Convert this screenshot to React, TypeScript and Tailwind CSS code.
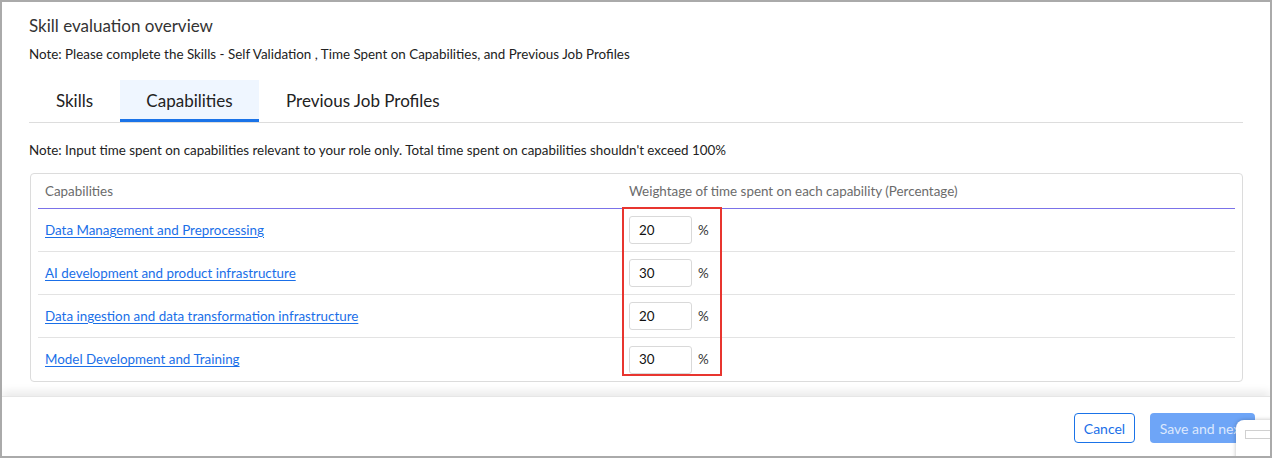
import React from "react";

const rows = [
  { name: "Data Management and Preprocessing", value: "20" },
  { name: "AI development and product infrastructure", value: "30" },
  { name: "Data ingestion and data transformation infrastructure", value: "20" },
  { name: "Model Development and Training", value: "30" },
];

export default function App() {
  return (
    <div
      className="relative w-[1272px] h-[458px] overflow-hidden bg-white border-2 border-[#aaaaaa] flex flex-col text-[#222]"
      style={{ fontFamily: "Lato, 'Noto Sans', sans-serif" }}
    >
      <div className="flex-1 px-[27px] pt-[13px]">
        <div className="text-[17px] leading-[22px] text-[#333]">Skill evaluation overview</div>
        <div className="mt-[8px] text-[13.4px] leading-[18px] text-[#222]">
          Note: Please complete the Skills - Self Validation , Time Spent on Capabilities, and Previous Job Profiles
        </div>
        <div className="mt-[17px] flex border-b border-[#dddddd] w-[1214px]">
          <div className="h-[42px] w-[91px] flex items-center justify-center text-[17px] text-[#222]">Skills</div>
          <div className="h-[42px] w-[139px] flex items-center justify-center text-[17px] text-[#222] bg-[#eff6ff] border-b-[3px] border-[#1a73e8] pt-[3px]">
            Capabilities
          </div>
          <div className="h-[42px] px-[27px] flex items-center text-[17px] text-[#222]">Previous Job Profiles</div>
        </div>
        <div className="mt-[18px] text-[13.4px] leading-[18px] text-[#222]">
          Note: Input time spent on capabilities relevant to your role only. Total time spent on capabilities shouldn't exceed 100%
        </div>
        <div className="mt-[14px] ml-[1px] w-[1213px] border border-[#dcdcdc] rounded-[4px] px-[7px]">
          <div className="flex h-[35px] pt-[1px] items-center border-b border-[#7b72e9] text-[13.4px] text-[#6b6b6b]">
            <div className="w-[584px] pl-[7px]">Capabilities</div>
            <div className="pl-[7px]">Weightage of time spent on each capability (Percentage)</div>
          </div>
          <div className="relative">
            {rows.map((r, i) => (
              <div
                key={r.name}
                className={`flex h-[43px] items-center text-[13.4px] ${i < rows.length - 1 ? "border-b border-[#e3e3e3]" : ""}`}
              >
                <div className="w-[584px] pl-[7px]">
                  <a href="#" className="text-[#1a6fe8] underline underline-offset-2">
                    {r.name}
                  </a>
                </div>
                <div className="pl-[7px] flex items-center">
                  <div className="w-[63px] h-[28px] border border-[#d9d9d9] rounded-[3px] flex items-center pl-[9px] text-[13.4px] text-[#111]">
                    {r.value}
                  </div>
                  <span className="ml-[6px] text-[13.4px] text-[#333]">%</span>
                </div>
              </div>
            ))}
            <div className="absolute left-[584px] top-[-2px] w-[100px] h-[169px] border-2 border-[#e8352f] pointer-events-none" />
          </div>
        </div>
      </div>
      <div className="h-[60px] shrink-0 bg-white shadow-[0_-5px_8px_rgba(0,0,0,0.08)] border-t border-[#e6e6e6] flex items-start justify-end pt-[16px] pr-[15px] gap-[15px]">
        <button className="h-[30px] w-[61px] border border-[#1a73e8] rounded-[4px] text-[14px] text-[#1a6fe8] bg-white">
          Cancel
        </button>
        <button className="h-[30px] w-[105px] rounded-[4px] text-[14px] text-[#dce8fd] bg-[#6ea5f7] whitespace-nowrap">
          Save and next
        </button>
      </div>
      <div className="absolute left-[1234px] top-[418px] w-[60px] h-[60px] bg-white rounded-tl-[8px] shadow-[0_0_4px_rgba(0,0,0,0.25)]">
        <div className="absolute left-[9px] top-[10px] w-[40px] h-[9px] border-t border-b border-l border-[#d0d0d0]" />
        <div className="absolute left-[36px] top-[34px] w-[2px] h-[4px] bg-[#999]" />
      </div>
    </div>
  );
}
